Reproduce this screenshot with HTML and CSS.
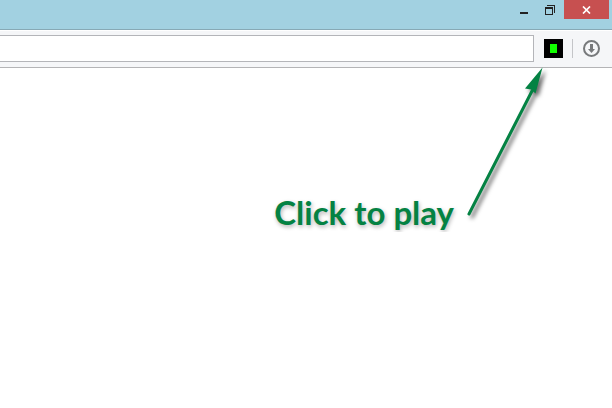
FILE: index.html
```html
<!DOCTYPE html>
<html lang="en">
<head>
<meta charset="utf-8">
<title>Click to play</title>
<link rel="stylesheet" href="styles.css">
</head>
<body>
<header class="titlebar">
  <button class="win-btn minimize" aria-label="Minimize">
    <svg width="10" height="10" shape-rendering="crispEdges"><rect x="1" y="7" width="8" height="2" fill="#222"/></svg>
  </button>
  <button class="win-btn restore" aria-label="Restore">
    <svg width="10" height="10" shape-rendering="crispEdges" fill="#222"><path d="M0 2h8v8H0zM1 4v5h6V4z" fill-rule="evenodd"/><path d="M2 0h8v8H9V1H2z"/></svg>
  </button>
  <button class="win-btn close" aria-label="Close">
    <svg width="9" height="8" viewBox="0 0 9 8"><path d="M1 .5l7 7M8 .5l-7 7" stroke="#fff" stroke-width="1.700"/></svg>
  </button>
</header>
<nav class="toolbar">
  <input class="address" type="text" aria-label="Address">
  <button class="tool extension" aria-label="Play"><span class="block"></span></button>
  <span class="divider"></span>
  <button class="tool download" aria-label="Downloads">
    <svg width="19" height="19" viewBox="0 0 19 19"><circle cx="9.5" cy="9.5" r="7.500" fill="none" stroke="#77797b" stroke-width="2"/><path d="M8 5h3v5h2l-3.500 4L6 10h2z" fill="#77797b"/></svg>
  </button>
</nav>
<main class="page">
  <p class="hint">Click to play</p>
  <svg class="arrow" width="85" height="150" viewBox="0 0 85 150" aria-hidden="true"><path d="M4 146L67 23" stroke="#048243" stroke-width="3" stroke-linecap="round"/><path d="M77.500 -.5L60 20.500l6 1 4.500 4z" fill="#048243"/></svg>
</main>
</body>
</html>
```
FILE: styles.css
```css
* { box-sizing: border-box; }
body {
  margin: 0;
  background: #fff;
  font-family: "Lato", "Open Sans", sans-serif;
}
button { padding: 0; border: 0; background: none; }
svg { display: block; }
.titlebar {
  display: flex;
  justify-content: flex-end;
  height: 30px;
  padding-right: 3px;
  background: #a2d1e1;
  border-bottom: 1px solid #87a9b5;
}
.win-btn {
  display: flex;
  align-items: center;
  justify-content: center;
  width: 26px;
  height: 19px;
}
.restore { margin-right: 1px; }
.close { width: 45px; background: #c75050; }
.toolbar {
  display: flex;
  align-items: center;
  height: 38px;
  padding: 0 11px 2px 0;
  background: #f5f6f8;
  border-top: 1px solid #fff;
  border-bottom: 1px solid #b4b4b6;
}
.address {
  flex: 1;
  min-width: 0;
  height: 27px;
  margin-right: 10px;
  border: 1px solid #b4b5b9;
  border-left: 0;
  background: #fff;
}
.tool {
  display: flex;
  align-items: center;
  justify-content: center;
  width: 19px;
  height: 19px;
}
.extension { background: #000; }
.block { width: 7px; height: 9px; background: #1f0; }
.divider { width: 1px; height: 19px; margin: 0 9px; background: #c4c5c8; }
.page {
  display: flex;
  align-items: flex-start;
  justify-content: flex-end;
  padding-right: 62px;
}
.hint {
  margin: 124px 11px 0 0;
  color: #048243;
  font-size: 33px;
  font-weight: 700;
  line-height: 40px;
  white-space: nowrap;
  text-shadow: 1px 2px 4px rgba(0, 0, 0, 0.3);
}
.arrow {
  flex: none;
  overflow: visible;
  filter: drop-shadow(3px 3px 2px rgba(0, 0, 0, 0.6));
}
```
